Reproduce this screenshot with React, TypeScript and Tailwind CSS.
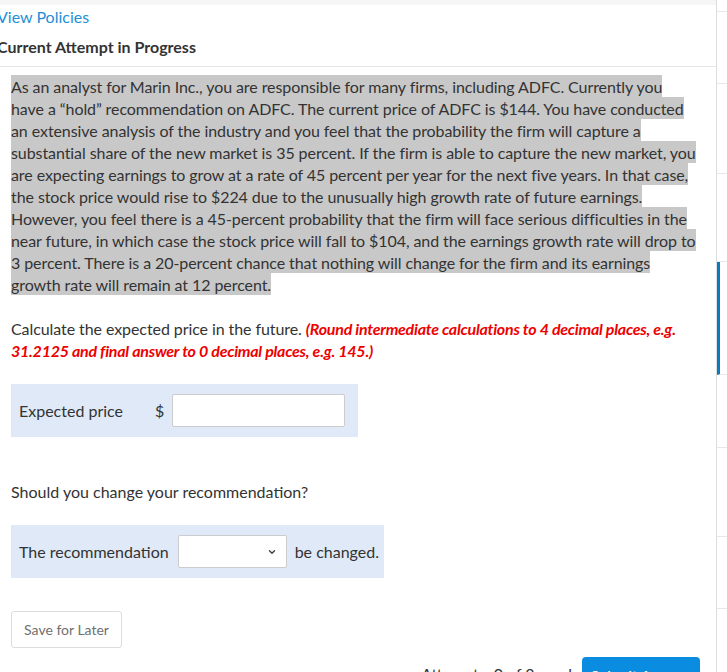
import { ChevronDown } from "lucide-react";

const SIDE_ITEMS = [
  { h: "h-[12px]", active: false },
  { h: "h-[72px]", active: false },
  { h: "h-[90px]", active: false },
  { h: "h-[88px]", active: false },
  { h: "h-[113px]", active: true },
  { h: "h-[73px]", active: false },
  { h: "h-[89px]", active: false },
  { h: "h-[72px]", active: false },
  { h: "h-[80px]", active: false },
];

const QUESTION =
  "As an analyst for Marin Inc., you are responsible for many firms, including ADFC. Currently you have a \u201chold\u201d recommendation on ADFC. The current price of ADFC is $144. You have conducted an extensive analysis of the industry and you feel that the probability the firm will capture a substantial share of the new market is 35 percent. If the firm is able to capture the new market, you are expecting earnings to grow at a rate of 45 percent per year for the next five years. In that case, the stock price would rise to $224 due to the unusually high growth rate of future earnings. However, you feel there is a 45-percent probability that the firm will face serious difficulties in the near future, in which case the stock price will fall to $104, and the earnings growth rate will drop to 3 percent. There is a 20-percent chance that nothing will change for the firm and its earnings growth rate will remain at 12 percent.";

export default function App() {
  return (
    <div className="flex h-[672px] w-[727px] overflow-hidden bg-white font-['Lato','Noto_Sans',sans-serif] text-[16px] leading-[22px] text-[#333]">
      <main className="w-[716px] shrink-0 overflow-hidden">
        <div className="h-[5px] bg-[#f6f6f6]" />

        <div className="-ml-[3px] pt-[1px]">
          <a className="block text-[#1e8fd8]">View Policies</a>
          <h2 className="mt-[8px] font-bold text-[#333]">Current Attempt in Progress</h2>
        </div>

        <div className="mt-[8px] h-px bg-[#e6e6e6]" />

        <div className="pl-[11px] pr-[12px]">
          <p className="mt-[8px] w-[688px] tracking-[-0.08px]">
            <span className="bg-[#c8c8c8] py-[1.5px] box-decoration-clone">{QUESTION}</span>
          </p>

          <p className="mt-[23px] w-[688px] tracking-[-0.08px]">
            Calculate the expected price in the future.{" "}
            <span className="font-bold italic tracking-[-0.25px] text-[#ee0000]">
              (Round intermediate calculations to 4 decimal places, e.g. 31.2125 and final answer to 0 decimal places, e.g. 145.)
            </span>
          </p>

          <div className="mt-[22px] flex h-[53px] w-[347px] items-center bg-[#dfe9f8] pl-[8px]">
            <span className="w-[136px]">Expected price</span>
            <span className="w-[17px]">$</span>
            <input
              type="text"
              className="h-[33px] w-[173px] rounded-[2px] border border-[#cccccc] bg-white px-2 outline-none"
            />
          </div>

          <p className="mt-[44px]">Should you change your recommendation?</p>

          <div className="mt-[22px] flex h-[53px] w-[373px] items-center bg-[#dfe9f8] pl-[8px]">
            <span>The recommendation</span>
            <div className="relative ml-[9px] h-[33px] w-[109px] rounded-[2px] border border-[#cccccc] bg-white">
              <ChevronDown
                className="absolute right-[9px] top-[11px] h-[10px] w-[10px] text-[#444]"
                strokeWidth={3.5}
              />
            </div>
            <span className="ml-[8px]">be changed.</span>
          </div>

          <button className="mt-[33px] h-[37px] w-[111px] rounded-[3px] border border-[#dcdcdc] bg-white text-[14px] text-[#6f6f6f]">
            Save for Later
          </button>

          <div className="mt-[9px] flex items-start justify-end pr-[4px]">
            <span className="mt-[6px] mr-[10px] text-[#333]">Attempts: 0 of 3 used</span>
            <button className="h-[38px] w-[118px] rounded-[4px] bg-[#0a8de0] text-[15px] font-semibold text-white">
              Submit Answer
            </button>
          </div>
        </div>
      </main>

      <aside className="flex w-[11px] shrink-0 flex-col border-l border-[#dddddd]">
        {SIDE_ITEMS.map((item, i) => (
          <div
            key={i}
            className={`${item.h} shrink-0 border-b border-[#e8e8e8] ${item.active ? "border-l-[3px] border-l-[#0a7bbd]" : ""}`}
          />
        ))}
      </aside>
    </div>
  );
}
